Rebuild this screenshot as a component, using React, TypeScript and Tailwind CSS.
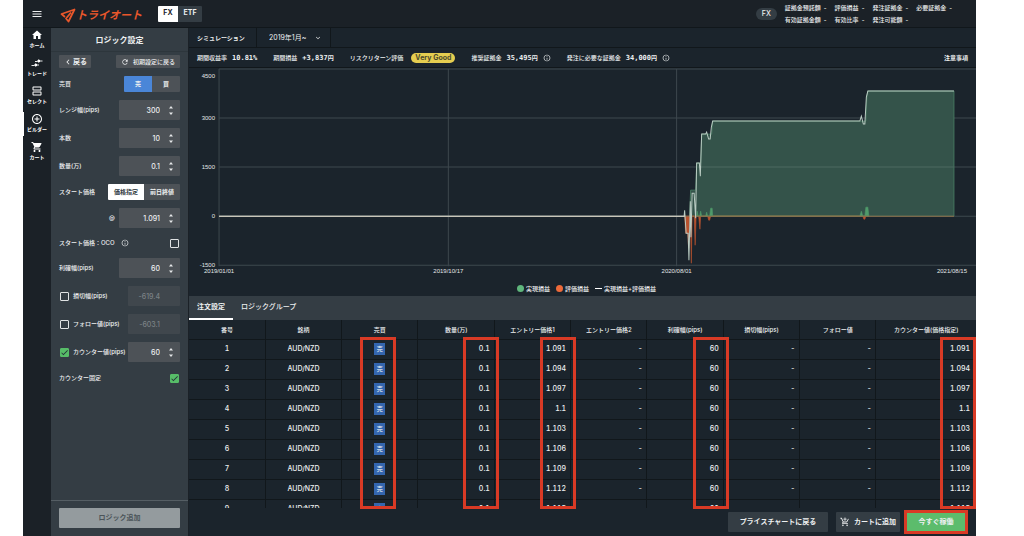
import React, { useState } from "react";
import {
  MdAddCircleOutline,
  MdCheck,
  MdChevronLeft,
  MdExpandMore,
  MdHome,
  MdInfoOutline,
  MdMenu,
  MdOutlineAddShoppingCart,
  MdOutlineViewAgenda,
  MdRefresh,
  MdShoppingCart,
} from "react-icons/md";

// ── Data ────────────────────────────────────────────────────────────
const ENTRY_PRICES = ["1.091", "1.094", "1.097", "1.1", "1.103", "1.106", "1.109", "1.112", "1.115"];

const COLUMNS = [
  "番号",
  "銘柄",
  "売買",
  "数量(万)",
  "エントリー価格1",
  "エントリー価格2",
  "利確幅(pips)",
  "損切幅(pips)",
  "フォロー値",
  "カウンター値(価格指定)",
];

const ACCOUNT_STATS = [
  ["証拠金預託額", "有効証拠金額"],
  ["評価損益", "有効比率"],
  ["発注証拠金", "発注可能額"],
  ["必要証拠金"],
];

// ── Nav rail ────────────────────────────────────────────────────────
const TradeIcon: React.FC<{ className?: string }> = ({ className }) => (
  <svg viewBox="0 0 24 24" className={className} fill="none" stroke="currentColor" strokeWidth="1.800">
    <path d="M1 17h6M12 16h4M8 9h5M18 8h5" />
    <path d="M9.500 12.500v7M15.500 4.500v7" />
    <path d="M7 14h5v4H7zM13 6h5v4h-5z" fill="currentColor" stroke="none" />
  </svg>
);

const NAV_ITEMS = [
  { label: "ホーム", Icon: MdHome },
  { label: "トレード", Icon: TradeIcon },
  { label: "セレクト", Icon: MdOutlineViewAgenda },
  { label: "ビルダー", Icon: MdAddCircleOutline, active: true },
  { label: "カート", Icon: MdShoppingCart },
];

const NavRail: React.FC = () => (
  <nav className="w-7 shrink-0">
    {NAV_ITEMS.map(({ label, Icon, active }) => (
      <a
        key={label}
        href="#"
        className="relative flex h-7 flex-col items-center pt-px text-[5px] leading-[8px] font-bold whitespace-nowrap text-white"
      >
        {active && <span className="absolute top-0 left-0 h-6 w-px bg-white" />}
        <Icon className="size-3" />
        {label}
      </a>
    ))}
  </nav>
);

// ── Header ──────────────────────────────────────────────────────────
const Header: React.FC = () => (
  <header className="flex h-7 shrink-0 items-center border-b border-[#11171b]">
    <button aria-label="メニュー" className="flex w-7 justify-center">
      <MdMenu className="size-3" />
    </button>
    <a href="#" className="ml-[9px] flex items-center pt-1 text-[#e9572b]">
      <svg viewBox="0 0 32 32" className="size-4" fill="none" stroke="currentColor" strokeWidth="3.500">
        <path d="M10 18 3 12 29 3 17 27 12 21 22 9" strokeLinejoin="round" />
      </svg>
      <span className="text-[11px] leading-none font-bold italic">トライオート</span>
    </a>
    <div className="ml-4 flex h-4 text-[7px] font-bold">
      <button className="w-5 rounded-l-[1px] bg-white text-[#1b2228]">FX</button>
      <button className="w-6 rounded-r-[1px] bg-[#343d44]">ETF</button>
    </div>
    <div className="mr-6 ml-auto flex items-center text-[6px] leading-[12px] font-medium">
      <span className="mr-2 rounded-full bg-[#343d44] px-1.5 text-[7px]">FX</span>
      <div className="flex gap-2">
        {ACCOUNT_STATS.map((col) => (
          <div key={col[0]}>
            {col.map((s) => (
              <p key={s} className="flex gap-[3px]">
                {s}
                <span>-</span>
              </p>
            ))}
          </div>
        ))}
      </div>
    </div>
  </header>
);

// ── Form parts ──────────────────────────────────────────────────────
const NumberField: React.FC<{ id: string; value: string; narrow?: boolean }> = ({ id, value, narrow }) => (
  <div className={`flex h-5 shrink-0 items-center rounded-[1px] bg-[#4d5257] ${narrow ? "w-[52px]" : "w-[61px]"}`}>
    <input
      id={id}
      defaultValue={value}
      inputMode="decimal"
      className="h-full w-0 flex-1 text-right text-[7px] leading-[8px] outline-none"
    />
    <svg viewBox="0 0 12 20" className="mx-1 h-5 w-3" fill="#e6e8e9" aria-hidden="true">
      <path d="M5 8.500 7 6l2 2.500zM5 12.500 7 15l2-2.500z" />
    </svg>
  </div>
);

const DisabledField: React.FC<{ id: string; value: string }> = ({ id, value }) => (
  <input
    id={id}
    defaultValue={value}
    disabled
    className="h-5 w-[52px] shrink-0 rounded-[1px] bg-[#40474d] pr-5 text-right text-[7px] leading-[8px] text-[#7b8185]"
  />
);

const CheckBox: React.FC<{ id: string; defaultChecked?: boolean }> = ({ id, defaultChecked }) => {
  const [checked, setChecked] = useState(Boolean(defaultChecked));

  return (
    <span className="relative mx-px flex size-[9px] shrink-0">
      <input
        id={id}
        type="checkbox"
        checked={checked}
        onChange={(e) => setChecked(e.target.checked)}
        className="size-[9px] appearance-none rounded-[1px] border border-[#e0e3e4] checked:border-[#57bd68] checked:bg-[#57bd68]"
      />
      {checked && <MdCheck className="pointer-events-none absolute inset-0 size-[9px] text-[#25333a]" />}
    </span>
  );
};

const FieldRow: React.FC<{ id: string; label: string; value: string }> = ({ id, label, value }) => (
  <div className="flex items-center justify-between">
    <label htmlFor={id}>{label}</label>
    <NumberField id={id} value={value} />
  </div>
);

// ── Logic settings panel ────────────────────────────────────────────
const LogicPanel: React.FC = () => (
  <aside className="flex w-[137px] shrink-0 flex-col bg-[#343d44] text-[6px] leading-[8px] font-medium">
    <h2 className="flex h-6 items-center justify-center border-b border-[#2d363c] text-[8px] font-bold">ロジック設定</h2>

    <div className="flex flex-1 flex-col gap-2 px-2 pt-[3px]">
      <div className="flex h-[13px] justify-between">
        <button className="flex w-8 items-center justify-center rounded-[1px] bg-[#4d5257] text-[7px] font-bold">
          <MdChevronLeft className="size-2.5" />
          戻る
        </button>
        <button className="flex w-16 items-center justify-center gap-1 rounded-[1px] bg-[#4d5257]">
          <MdRefresh className="size-2" />
          初期設定に戻る
        </button>
      </div>

      <div className="flex h-4 items-center justify-between">
        <span>売買</span>
        <div className="flex h-4 w-14 font-bold">
          <button className="flex-1 rounded-l-[1px] bg-[#4a86d8]">売</button>
          <button className="flex-1 rounded-r-[1px] bg-[#4d5257]">買</button>
        </div>
      </div>

      <FieldRow id="range" label="レンジ幅(pips)" value="300" />
      <FieldRow id="count" label="本数" value="10" />
      <FieldRow id="lots" label="数量(万)" value="0.1" />

      <div className="flex h-4 items-center justify-between">
        <span>スタート価格</span>
        <div className="flex h-4 w-[72px] font-bold">
          <button className="flex-1 rounded-l-[1px] bg-white text-[#343d44]">価格指定</button>
          <button className="flex-1 rounded-r-[1px] bg-[#4d5257]">前日終値</button>
        </div>
      </div>

      <div className="flex items-center justify-end gap-1">
        <label htmlFor="start">@</label>
        <NumberField id="start" value="1.091" />
      </div>

      <div className="flex h-3.5 items-center justify-between">
        <label htmlFor="oco" className="flex items-center gap-1.5">
          スタート価格：OCO
          <MdInfoOutline className="size-2" />
        </label>
        <CheckBox id="oco" />
      </div>

      <FieldRow id="profit" label="利確幅(pips)" value="60" />

      <div className="flex items-center">
        <CheckBox id="use-loss" />
        <label htmlFor="use-loss" className="ml-[3px] flex-1 whitespace-nowrap">損切幅(pips)</label>
        <DisabledField id="loss" value="-619.4" />
      </div>
      <div className="flex items-center">
        <CheckBox id="use-follow" />
        <label htmlFor="use-follow" className="ml-[3px] flex-1 whitespace-nowrap">フォロー値(pips)</label>
        <DisabledField id="follow" value="-603.1" />
      </div>
      <div className="flex items-center">
        <CheckBox id="use-counter" defaultChecked />
        <label htmlFor="use-counter" className="ml-[3px] w-0 flex-1 whitespace-nowrap">カウンター値(pips)</label>
        <NumberField id="counter" value="60" narrow />
      </div>

      <div className="flex h-4 items-center justify-between">
        <label htmlFor="fixed">カウンター固定</label>
        <CheckBox id="fixed" defaultChecked />
      </div>
    </div>

    <div className="border-t border-[#555e64] px-2 pt-[7px] pb-2">
      <button className="h-5 w-full rounded-[1px] bg-[#949b9e] text-[7px] font-bold text-[#4b5459]">ロジック追加</button>
    </div>
  </aside>
);

// ── Simulation summary ──────────────────────────────────────────────
const Stat: React.FC<{ label: string; value: string; unit?: string; info?: boolean }> = ({ label, value, unit, info }) => (
  <p className="flex items-center gap-[5px]">
    {label}
    <span className="font-bold">
      <span className="font-['DejaVu_Sans_Mono',monospace] text-[7px]">{value}</span>
      {unit}
    </span>
    {info && <MdInfoOutline className="size-2" />}
  </p>
);

const Summary: React.FC = () => (
  <>
    <div className="flex h-5 shrink-0 items-stretch border-b border-[#11171b] text-[7px] leading-[8px]">
      <label htmlFor="period" className="flex w-[68px] items-center border-r border-[#11171b] pl-2 text-[6px] font-bold">
        シミュレーション
      </label>
      <div className="relative flex w-[74px] items-center border-r border-[#11171b] pl-3">
        <select id="period" className="w-full appearance-none bg-transparent outline-none">
          <option>2019年1月~</option>
        </select>
        <MdExpandMore className="pointer-events-none absolute right-2 size-2" />
      </div>
    </div>
    <div className="flex h-5 shrink-0 items-center gap-4 border-b border-[#11171b] px-2 text-[6px] leading-[8px] font-medium">
      <Stat label="期間収益率" value="10.81%" />
      <Stat label="期間損益" value="+3,837" unit="円" />
      <p className="flex items-center gap-2">
        リスクリターン評価
        <span className="rounded-full bg-[#e5cd50] px-1 py-px text-[7px] font-bold text-[#4c4a2c]">Very Good</span>
      </p>
      <Stat label="推奨証拠金" value="35,495" unit="円" info />
      <Stat label="発注に必要な証拠金" value="34,000" unit="円" info />
      <a href="#" className="ml-auto font-bold">注意事項</a>
    </div>
  </>
);

// ── Profit chart ────────────────────────────────────────────────────
const Y_TICKS = [
  { label: "4500", y: 1, textY: 10 },
  { label: "3000", y: 50, textY: 52 },
  { label: "1500", y: 99, textY: 101 },
  { label: "0", y: 148, textY: 150 },
  { label: "-1500", y: 197, textY: 199 },
];

const X_TICKS = [
  { label: "2019/01/01", x: 30 },
  { label: "2019/10/17", x: 259 },
  { label: "2020/08/01", x: 487 },
];

const REALIZED =
  "500,148 501,122 506,122 507,95 511,95 512,66 522,66 523,53 676,53 677,29 678,23 764,23 764,148";
const UNREALIZED_LOSS =
  "495,148 496,165 498,165 499,180 500,148 501,160 501.700,195 502.500,148 504.500,148 505.500,177 506.500,148 509,148 510.300,161 511,148 518,148 519,152 520,152 521,148 673,148 674,151 675,151 676,148";
const UNREALIZED_GAIN =
  "507,148 507.500,143 508.500,148 510,148 511,143 512,148 516,148 517,144 518,148 520,148 521,140 522.500,140 523,148 670,148 671.500,143 673,148 675,148 676,139 678,139 679,148";
const TOTAL =
  "30,148 494.500,148 495,142 496.500,165 498.500,165 499.300,192 500.700,133 501.300,169 502.500,125 504.500,125 506,150 507,95 509.700,95 510.700,108 512,66 516,66 517,64 519,71 520.500,71 521.700,59 523,53 670,53 671.500,48 673.500,56 675,56 676.500,29 678,23 764,23";

const ProfitChart: React.FC = () => (
  <section className="shrink-0 text-[6px] font-medium">
    <svg viewBox="0 0 786 212" className="block h-auto w-full font-['Liberation_Sans',sans-serif]" fill="none">
      {Y_TICKS.map((t) => (
        <g key={t.label}>
          <line x1="30" x2="786" y1={t.y} y2={t.y} stroke="#3e484e" />
          <text x="26" y={t.textY} textAnchor="end" fontSize="6" fill="#e3e6e7">{t.label}</text>
        </g>
      ))}
      {X_TICKS.map((t) => (
        <g key={t.label}>
          <line x1={t.x} x2={t.x} y1="1" y2="198" stroke="#3e484e" />
          <text x={t.x} y="205" textAnchor="middle" fontSize="6" fill="#e3e6e7">{t.label}</text>
        </g>
      ))}
      <text x="762" y="205" textAnchor="middle" fontSize="6" fill="#e3e6e7">2021/08/15</text>

      <polygon points={REALIZED} fill="#34534a" stroke="#4b8265" strokeWidth="0.800" />
      <path d="M508 99H764" stroke="#4c6a60" />
      <polygon points={UNREALIZED_LOSS} fill="#b8532f" stroke="#b8532f" strokeWidth="0.600" />
      <polygon points={UNREALIZED_GAIN} fill="#4f9a6a" stroke="#4f9a6a" strokeWidth="0.600" />
      <polyline points="495,148 764,148" stroke="#8f6a49" />
      <polyline points={TOTAL} stroke="#b9cbc2" />
      <line x1="30" x2="495" y1="148" y2="148" stroke="#d8cfc0" />
    </svg>
    <ul className="flex h-4 items-center justify-center gap-1.5 pl-2">
      <li className="flex items-center gap-0.5">
        <span className="size-[7px] rounded-full bg-[#5fb67c]" />
        実現損益
      </li>
      <li className="flex items-center gap-0.5">
        <span className="size-[7px] rounded-full bg-[#ee6a3a]" />
        評価損益
      </li>
      <li className="flex items-center gap-0.5">
        <span className="h-px w-[7px] bg-white" />
        実現損益+評価損益
      </li>
    </ul>
  </section>
);

// ── Orders table ────────────────────────────────────────────────────
const HIGHLIGHT = "pointer-events-none absolute top-[17px] -bottom-px border-3 border-[#d93a25]";
const CELL = "border-r border-[#11171b] p-0 text-center";
const NUM_CELL = "border-r border-[#11171b] py-0 pr-1 pl-0";

const OrdersTable: React.FC = () => (
  <section className="flex min-h-0 flex-1 flex-col">
    <div className="flex h-6 shrink-0 bg-[#343d44] text-[7px]">
      <button className="border-b-2 border-white px-2 font-bold">注文設定</button>
      <button className="border-b-2 border-transparent px-2 font-medium">ロジックグループ</button>
    </div>

    <div className="relative min-h-0 flex-1">
      <div className="h-full overflow-hidden">
        <table className="w-full table-fixed border-collapse text-[7px] leading-[8px] font-medium">
          <thead>
            <tr className="h-[19px] border-b border-[#11171b] text-[6px]">
              {COLUMNS.map((c, i) => (
                <th
                  key={c}
                  className={`p-0 font-medium whitespace-nowrap ${i < 9 ? "w-[9.7%] border-r border-[#11171b]" : ""}`}
                >
                  {c}
                </th>
              ))}
            </tr>
          </thead>
          <tbody>
            {ENTRY_PRICES.map((price, i) => (
              <tr key={price} className="h-5 border-b border-[#11171b] text-right tabular-nums">
                <td className={CELL}>{i + 1}</td>
                <td className={CELL}>AUD/NZD</td>
                <td className={CELL}>
                  <span className="mx-auto flex h-3 w-[11px] items-center justify-center bg-[#3466b0] text-[6px]">売</span>
                </td>
                <td className={NUM_CELL}>0.1</td>
                <td className={NUM_CELL}>{price}</td>
                <td className={NUM_CELL}>-</td>
                <td className={NUM_CELL}>60</td>
                <td className={NUM_CELL}>-</td>
                <td className={NUM_CELL}>-</td>
                <td className="py-0 pr-1.5 pl-0">{price}</td>
              </tr>
            ))}
          </tbody>
        </table>
      </div>

      <span className={`${HIGHLIGHT} left-[21.7%] w-9`} />
      <span className={`${HIGHLIGHT} left-[34.8%] w-9`} />
      <span className={`${HIGHLIGHT} left-[44.6%] w-9`} />
      <span className={`${HIGHLIGHT} left-[64.1%] w-9`} />
      <span className={`${HIGHLIGHT} right-0 w-9`} />
    </div>
  </section>
);

// ── Footer actions ──────────────────────────────────────────────────
const Actions: React.FC = () => (
  <footer className="flex h-7 shrink-0 items-center justify-end gap-2 pr-2 text-[7px] font-bold">
    <button className="h-5 w-[100px] rounded-[1px] bg-[#343d44]">プライスチャートに戻る</button>
    <button className="flex h-5 w-16 items-center justify-center gap-1 rounded-[1px] bg-[#343d44] whitespace-nowrap">
      <MdOutlineAddShoppingCart className="size-2.5" />
      カートに追加
    </button>
    <button className="-ml-1 h-6 w-16 border-3 border-[#d93a25] bg-[#5cbc6c]">今すぐ稼働</button>
  </footer>
);

const App: React.FC = () => (
  <div className="h-screen bg-white pr-12 pl-[23px]">
    <div className="flex h-full flex-col bg-[#1b2127] font-[Inter,'Noto_Sans_CJK_JP',sans-serif] text-[#eef0f1]">
      <Header />
      <div className="flex min-h-0 flex-1">
        <NavRail />
        <LogicPanel />
        <main className="ml-px flex min-w-0 flex-1 flex-col bg-[#1b242c]">
          <Summary />
          <ProfitChart />
          <OrdersTable />
          <Actions />
        </main>
      </div>
    </div>
  </div>
);

export default App;
